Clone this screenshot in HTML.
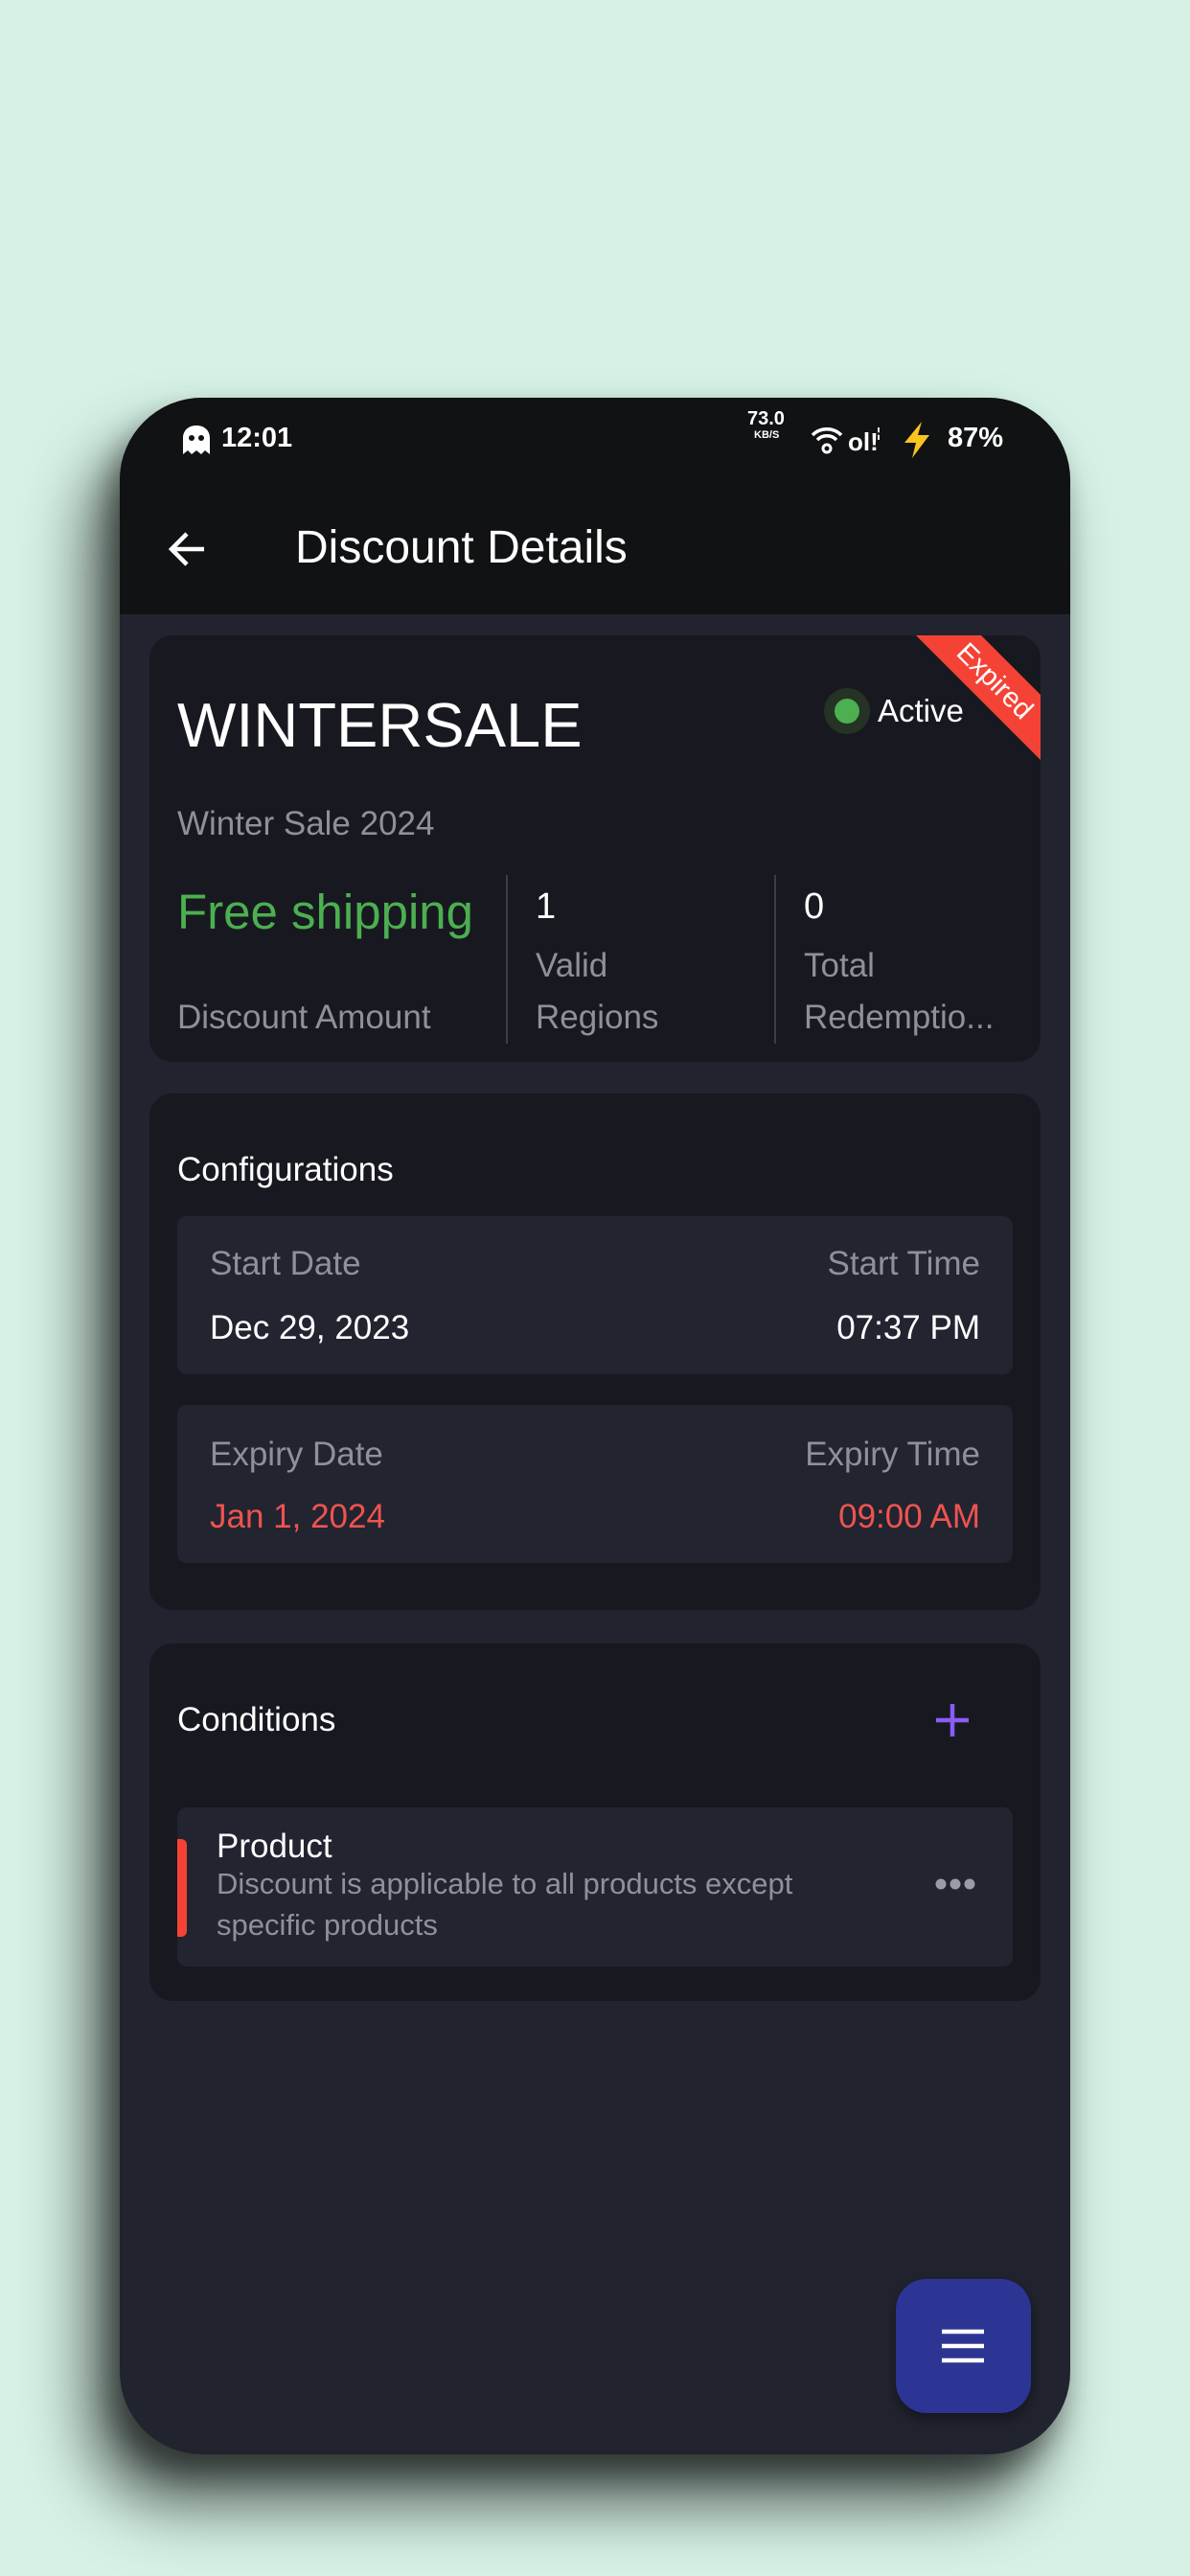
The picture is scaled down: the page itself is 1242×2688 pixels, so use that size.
<!DOCTYPE html>
<html><head><meta charset="utf-8"><style>
*{margin:0;padding:0;box-sizing:border-box}
body{width:1242px;height:2688px;background:#d6f2e6;position:relative;overflow:hidden;font-family:"Liberation Sans",sans-serif}
.phone{position:absolute;left:125px;top:415px;width:992px;height:2146px;border-radius:86px;background:#21232e;overflow:hidden;box-shadow:-30px 50px 70px rgba(0,0,0,.65),-10px 20px 30px rgba(0,0,0,.4)}
.t{position:absolute;white-space:nowrap;line-height:60px;height:60px}
.card{position:absolute;left:31px;width:930px;background:#181920;border-radius:24px;overflow:hidden}
.box{position:absolute;left:29px;width:872px;background:#222430;border-radius:10px}
.g{color:#8e909a}
.w{color:#fff}
</style></head><body>
<div class="phone">
  <div style="position:absolute;left:0;top:0;width:992px;height:226px;background:#111214"></div>
  <svg style="position:absolute;left:63px;top:27px" width="34" height="34" viewBox="0 0 34 34"><path d="M3 32V15C3 7 9 2 17 2s14 5 14 13v17l-5-4-4 4-5-4-5 4-4-4z" fill="#fff"/><circle cx="12" cy="15" r="3" fill="#111"/><circle cx="22" cy="15" r="3" fill="#111"/></svg>
  <div class="t w" style="left:106px;top:12px;font-size:29px;font-weight:bold">12:01</div>
  <div class="t w" style="left:655px;top:10px;font-size:20px;font-weight:bold;line-height:24px">73.0</div>
  <div class="t w" style="left:662px;top:32px;font-size:11px;font-weight:bold;line-height:14px">KB/S</div>
  <svg style="position:absolute;left:720px;top:28px" width="36" height="32" viewBox="0 0 36 32"><path d="M3 11a21 21 0 0 1 30 0M8 16a14 14 0 0 1 20 0" stroke="#fff" stroke-width="3.5" fill="none"/><circle cx="18" cy="25" r="4" stroke="#fff" stroke-width="3" fill="none"/></svg>
  <div class="t w" style="left:760px;top:16px;font-size:26px;font-weight:bold">ol!</div>
  <div class="t w" style="left:790px;top:6px;font-size:14px;font-weight:bold">¦</div>
  <svg style="position:absolute;left:815px;top:24px" width="34" height="40" viewBox="0 0 34 40"><path d="M22 1L4 23h12l-4 16 18-24H18z" fill="#f7c51e"/></svg>
  <div class="t w" style="left:864px;top:12px;font-size:29px;font-weight:bold">87%</div>
  <svg style="position:absolute;left:50px;top:137px" width="42" height="42" viewBox="0 0 42 42"><path d="M38 21H5M20 5L4 21l16 16" stroke="#fff" stroke-width="4.5" fill="none"/></svg>
  <div class="t w" style="left:183px;top:127px;font-size:48px">Discount Details</div>

  <div class="card" style="top:248px;height:445px">
    <div style="position:absolute;left:0;top:0;width:930px;height:445px;background:#f44336;clip-path:polygon(800px 0,868px 0,930px 62px,930px 130px)"></div>
    <div class="t w" style="left:832px;top:18px;width:100px;text-align:center;font-size:29px;transform:rotate(45deg)">Expired</div>
    <div class="t w" style="left:29px;top:49px;font-size:65px;line-height:90px;height:90px">WINTERSALE</div>
    <div style="position:absolute;left:704px;top:55px;width:48px;height:48px;border-radius:50%;background:#243325"></div>
    <div style="position:absolute;left:715px;top:66px;width:26px;height:26px;border-radius:50%;background:#4caf50"></div>
    <div class="t w" style="left:760px;top:49px;font-size:33px">Active</div>
    <div class="t g" style="left:29px;top:167px;font-size:35px">Winter Sale 2024</div>
    <div class="t" style="left:29px;top:259px;font-size:51px;color:#4caf50">Free shipping</div>
    <div class="t g" style="left:29px;top:369px;font-size:35px">Discount Amount</div>
    <div style="position:absolute;left:372px;top:250px;width:2px;height:176px;background:#3c3e47"></div>
    <div style="position:absolute;left:652px;top:250px;width:2px;height:176px;background:#3c3e47"></div>
    <div class="t w" style="left:403px;top:253px;font-size:38px">1</div>
    <div class="t g" style="left:403px;top:315px;font-size:35px">Valid</div>
    <div class="t g" style="left:403px;top:369px;font-size:35px">Regions</div>
    <div class="t w" style="left:683px;top:253px;font-size:38px">0</div>
    <div class="t g" style="left:683px;top:315px;font-size:35px">Total</div>
    <div class="t g" style="left:683px;top:369px;font-size:35px">Redemptio...</div>
  </div>

  <div class="card" style="top:726px;height:539px">
    <div class="t w" style="left:29px;top:50px;font-size:35px">Configurations</div>
    <div class="box" style="top:128px;height:165px">
      <div class="t g" style="left:34px;top:20px;font-size:35px">Start Date</div>
      <div class="t w" style="left:34px;top:87px;font-size:35px">Dec 29, 2023</div>
      <div class="t g" style="right:34px;top:20px;font-size:35px">Start Time</div>
      <div class="t w" style="right:34px;top:87px;font-size:35px">07:37 PM</div>
    </div>
    <div class="box" style="top:325px;height:165px">
      <div class="t g" style="left:34px;top:22px;font-size:35px">Expiry Date</div>
      <div class="t" style="left:34px;top:87px;font-size:35px;color:#ef5350">Jan 1, 2024</div>
      <div class="t g" style="right:34px;top:22px;font-size:35px">Expiry Time</div>
      <div class="t" style="right:34px;top:87px;font-size:35px;color:#ef5350">09:00 AM</div>
    </div>
  </div>

  <div class="card" style="top:1300px;height:373px">
    <div class="t w" style="left:29px;top:50px;font-size:35px">Conditions</div>
    <svg style="position:absolute;left:820px;top:62px" width="36" height="36" viewBox="0 0 36 36"><path d="M18 1v34M1 18h34" stroke="#8b5cf6" stroke-width="4.5"/></svg>
    <div class="box" style="top:171px;height:166px">
      <div style="position:absolute;left:0;top:33px;width:10px;height:102px;background:#f44336;border-radius:0 6px 6px 0"></div>
      <div class="t w" style="left:41px;top:11px;font-size:35px">Product</div>
      <div class="t g" style="left:41px;top:58px;font-size:31px;line-height:43px;height:43px">Discount is applicable to all products except</div>
      <div class="t g" style="left:41px;top:101px;font-size:31px;line-height:43px;height:43px">specific products</div>
      <svg style="position:absolute;left:790px;top:73px" width="44" height="14" viewBox="0 0 44 14"><circle cx="7" cy="7" r="5.5" fill="#9a9ca6"/><circle cx="22" cy="7" r="5.5" fill="#9a9ca6"/><circle cx="37" cy="7" r="5.5" fill="#9a9ca6"/></svg>
    </div>
  </div>

  <div style="position:absolute;left:810px;top:1963px;width:141px;height:140px;border-radius:32px;background:#2c3593;box-shadow:0 6px 14px rgba(0,0,0,.4)">
    <svg style="position:absolute;left:46px;top:50px" width="48" height="40" viewBox="0 0 48 40"><path d="M2 5h44M2 20h44M2 35h44" stroke="#fff" stroke-width="4.5"/></svg>
  </div>
</div>
</body></html>
